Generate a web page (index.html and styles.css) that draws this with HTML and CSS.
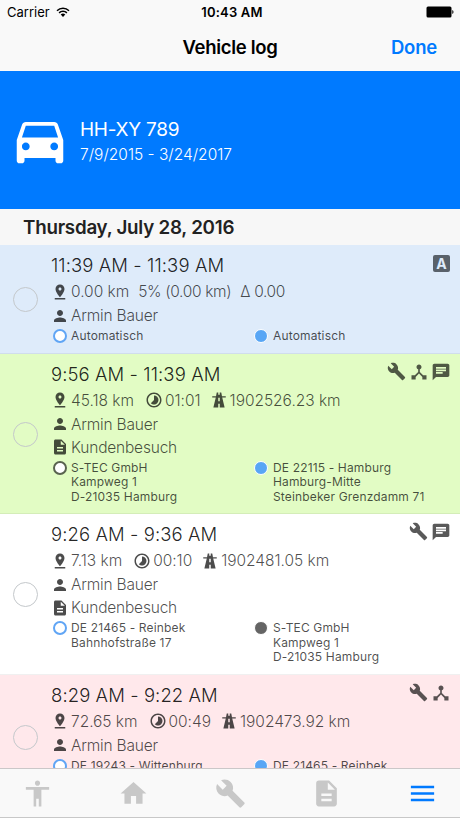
FILE: index.html
```
<!DOCTYPE html>
<html lang="en">
<head>
  <meta charset="UTF-8">
  <meta name="viewport" content="width=device-width, initial-scale=1.0">
  <title>Vehicle log</title>
  <link rel="stylesheet" href="styles.css">
</head>
<body>
  <!-- Icons -->
  <svg class="sprite" aria-hidden="true">
    <symbol id="pin" viewBox="0 0 24 24"><path d="M18 8c0-3.310-2.690-6-6-6S6 4.690 6 8c0 4.500 6 11 6 11s6-6.500 6-11zm-8 0c0-1.100.9-2 2-2s2 .9 2 2-.89 2-2 2c-1.100 0-2-.9-2-2zM5 20v2h14v-2H5z"/></symbol>
    <symbol id="person" viewBox="0 0 24 24"><path d="M12 12c2.210 0 4-1.790 4-4s-1.790-4-4-4-4 1.790-4 4 1.790 4 4 4zm0 2c-2.670 0-8 1.340-8 4v2h16v-2c0-2.660-5.330-4-8-4z"/></symbol>
    <symbol id="doc" viewBox="0 0 24 24"><path d="M14 2H6c-1.100 0-1.990.9-1.990 2L4 20c0 1.100.89 2 1.990 2H18c1.100 0 2-.9 2-2V8l-6-6zm2 16H8v-2h8v2zm0-4H8v-2h8v2zm-3-5V3.500L18.500 9H13z"/></symbol>
    <symbol id="car" viewBox="0 0 24 24"><path d="M18.920 6.010C18.720 5.420 18.160 5 17.500 5h-11c-.66 0-1.210.42-1.420 1.010L3 12v8c0 .55.45 1 1 1h1c.55 0 1-.45 1-1v-1h12v1c0 .55.45 1 1 1h1c.55 0 1-.45 1-1v-8l-2.080-5.990zM6.500 16c-.83 0-1.500-.67-1.500-1.500S5.670 13 6.500 13s1.500.67 1.500 1.500S7.330 16 6.500 16zm11 0c-.83 0-1.500-.67-1.500-1.500s.67-1.500 1.500-1.500 1.500.67 1.500 1.500-.67 1.500-1.500 1.500zM5 11l1.500-4.500h11L19 11H5z"/></symbol>
    <symbol id="wrench" viewBox="0 0 24 24"><path d="M22.700 19l-9.100-9.100c.9-2.300.4-5-1.500-6.900-2-2-5-2.400-7.400-1.300L9 6 6 9 1.600 4.700C.4 7.100.9 10.100 2.900 12.100c1.900 1.900 4.600 2.400 6.900 1.500l9.100 9.100c.4.4 1 .4 1.400 0l2.300-2.300c.5-.4.5-1.100.1-1.400z"/></symbol>
    <symbol id="chat" viewBox="0 0 24 24"><path d="M20 2H4c-1.100 0-1.990.9-1.990 2L2 22l4-4h14c1.100 0 2-.9 2-2V4c0-1.100-.9-2-2-2zM6 9h12v2H6V9zm8 5H6v-2h8v2zm4-6H6V6h12v2z"/></symbol>
    <symbol id="hub" viewBox="0 0 24 24"><path d="M17 16l-4-4V8.820C14.160 8.400 15 7.300 15 6c0-1.660-1.340-3-3-3S9 4.340 9 6c0 1.300.84 2.400 2 2.820V12l-4 4H3v5h5v-3.050l4-4.200 4 4.200V21h5v-5h-4z"/></symbol>
    <symbol id="time" viewBox="0 0 24 24"><path d="M16.240 7.760C15.070 6.590 13.540 6 12 6v6l-4.240 4.240c2.340 2.340 6.140 2.340 8.490 0 2.340-2.340 2.340-6.140-.01-8.480zM12 2C6.480 2 2 6.480 2 12s4.480 10 10 10 10-4.480 10-10S17.520 2 12 2zm0 18c-4.420 0-8-3.580-8-8s3.580-8 8-8 8 3.580 8 8-3.580 8-8 8z"/></symbol>
    <symbol id="road" viewBox="0 0 24 24"><path d="M9 2h2v3h2V2h2l1 5h5v1.600h-4.700L19.500 22H13v-5h-2v5H4.500L7.700 8.600H3V7h5zM11 9v4.500h2V9z" fill-rule="evenodd"/></symbol>
    <symbol id="home" viewBox="0 0 24 24"><path d="M10 20v-6h4v6h5v-8h3L12 3 2 12h3v8z"/></symbol>
    <symbol id="body" viewBox="0 0 24 24"><path d="M12 2c1.100 0 2 .9 2 2s-.9 2-2 2-2-.9-2-2 .9-2 2-2zm9 7h-6v13h-2v-6h-2v6H9V9H3V7h18v2z"/></symbol>
    <symbol id="menu" viewBox="0 0 24 24"><path d="M3 18h18v-2H3v2zm0-5h18v-2H3v2zm0-7v2h18V6H3z"/></symbol>
  </svg>

  <div class="screen">
    <header class="top">
      <div class="status">
        <div class="carrier">
          <span>Carrier</span>
          <svg class="wifi" viewBox="0 0 14 10">
            <path d="M1 3.700a8.600 8.600 0 0 1 12 0M3.100 5.900a5.500 5.500 0 0 1 7.800 0" fill="none" stroke="#000" stroke-width="1.500"/>
            <path d="M4.700 7.500a3.300 3.300 0 0 1 4.600 0L7 9.900z"/>
          </svg>
        </div>
        <span class="clock">10:43 AM</span>
        <svg class="battery" viewBox="0 0 28 12">
          <rect x="0.500" y="0.500" width="25" height="11" rx="1.500"/>
          <path d="M26.300 4c1.600.5 1.600 3.500 0 4z"/>
        </svg>
      </div>
      <div class="nav">
        <h1>Vehicle log</h1>
        <a class="done" href="#">Done</a>
      </div>
    </header>

    <section class="vehicle">
      <svg class="car"><use href="#car"/></svg>
      <div class="vehicle-text">
        <p class="plate">HH-XY 789</p>
        <p class="period">7/9/2015 - 3/24/2017</p>
      </div>
    </section>

    <h2 class="day"><span>Thursday, July 28, 2016</span></h2>

    <main class="log">
      <article class="trip blue">
        <span class="check"></span>
        <div class="info">
          <div class="head">
            <h3>11:39 AM - 11:39 AM</h3>
            <div class="flags"><span class="auto">A</span></div>
          </div>
          <div class="line stats">
            <svg><use href="#pin"/></svg><span>0.00 km</span><span class="extra">5% (0.00 km)</span><span class="extra">Δ 0.00</span>
          </div>
          <div class="line"><svg><use href="#person"/></svg><span>Armin Bauer</span></div>
          <div class="places">
            <p class="place"><i class="dot ring"></i>Automatisch</p>
            <p class="place"><i class="dot full"></i>Automatisch</p>
          </div>
        </div>
      </article>

      <article class="trip green">
        <span class="check"></span>
        <div class="info">
          <div class="head">
            <h3>9:56 AM - 11:39 AM</h3>
            <div class="flags">
              <svg class="tool"><use href="#wrench"/></svg>
              <svg><use href="#hub"/></svg>
              <svg><use href="#chat"/></svg>
            </div>
          </div>
          <div class="line stats">
            <svg><use href="#pin"/></svg><span>45.18 km</span>
            <svg class="time"><use href="#time"/></svg><span>01:01</span>
            <svg class="road"><use href="#road"/></svg><span>1902526.23 km</span>
          </div>
          <div class="line"><svg><use href="#person"/></svg><span>Armin Bauer</span></div>
          <div class="line"><svg><use href="#doc"/></svg><span>Kundenbesuch</span></div>
          <div class="places">
            <p class="place"><i class="dot ring gray"></i>S-TEC GmbH<br>Kampweg 1<br>D-21035 Hamburg</p>
            <p class="place"><i class="dot full"></i>DE 22115 - Hamburg<br>Hamburg-Mitte<br>Steinbeker Grenzdamm 71</p>
          </div>
        </div>
      </article>

      <article class="trip white">
        <span class="check"></span>
        <div class="info">
          <div class="head">
            <h3>9:26 AM - 9:36 AM</h3>
            <div class="flags">
              <svg class="tool"><use href="#wrench"/></svg>
              <svg><use href="#chat"/></svg>
            </div>
          </div>
          <div class="line stats">
            <svg><use href="#pin"/></svg><span>7.13 km</span>
            <svg class="time"><use href="#time"/></svg><span>00:10</span>
            <svg class="road"><use href="#road"/></svg><span>1902481.05 km</span>
          </div>
          <div class="line"><svg><use href="#person"/></svg><span>Armin Bauer</span></div>
          <div class="line"><svg><use href="#doc"/></svg><span>Kundenbesuch</span></div>
          <div class="places">
            <p class="place"><i class="dot ring"></i>DE 21465 - Reinbek<br>Bahnhofstraße 17</p>
            <p class="place"><i class="dot full gray"></i>S-TEC GmbH<br>Kampweg 1<br>D-21035 Hamburg</p>
          </div>
        </div>
      </article>

      <article class="trip pink">
        <span class="check"></span>
        <div class="info">
          <div class="head">
            <h3>8:29 AM - 9:22 AM</h3>
            <div class="flags">
              <svg class="tool"><use href="#wrench"/></svg>
              <svg><use href="#hub"/></svg>
            </div>
          </div>
          <div class="line stats">
            <svg><use href="#pin"/></svg><span>72.65 km</span>
            <svg class="time"><use href="#time"/></svg><span>00:49</span>
            <svg class="road"><use href="#road"/></svg><span>1902473.92 km</span>
          </div>
          <div class="line"><svg><use href="#person"/></svg><span>Armin Bauer</span></div>
          <div class="places">
            <p class="place"><i class="dot ring"></i>DE 19243 - Wittenburg</p>
            <p class="place"><i class="dot full"></i>DE 21465 - Reinbek</p>
          </div>
        </div>
      </article>
    </main>

    <nav class="tabs">
      <a href="#"><svg><use href="#body"/></svg></a>
      <a href="#"><svg><use href="#home"/></svg></a>
      <a href="#"><svg><use href="#wrench"/></svg></a>
      <a href="#"><svg><use href="#doc"/></svg></a>
      <a href="#" class="active"><svg><use href="#menu"/></svg></a>
    </nav>
  </div>
</body>
</html>
```

FILE: styles.css
```
:root {
  --blue: #007aff;
  --bar: #f9f9f9;
}

* {
  box-sizing: border-box;
}

body {
  margin: 0;
  font-family: Inter, "Liberation Sans", sans-serif;
  color: #000;
}

h1, h2, h3, p {
  margin: 0;
}

a {
  text-decoration: none;
  color: inherit;
}

svg {
  display: block;
  flex: none;
  fill: currentColor;
}

.sprite {
  position: absolute;
  width: 0;
  height: 0;
}

.screen {
  width: 460px;
  height: 818px;
  display: flex;
  flex-direction: column;
  overflow: hidden;
}

/* Status bar and title */
.top {
  height: 71px;
  background: var(--bar);
}

.status {
  height: 23px;
  padding: 0 6px 0 7px;
  display: grid;
  grid-template-columns: 1fr auto 1fr;
  align-items: center;
  font-size: 13px;
}

.carrier {
  display: flex;
  align-items: center;
  gap: 6px;
}

.wifi {
  width: 14px;
  height: 10px;
}

.clock {
  padding-left: 3px;
  font-weight: 600;
  letter-spacing: 0.2px;
}

.battery {
  width: 28px;
  height: 12px;
  justify-self: end;
}

.nav {
  height: 48px;
  padding: 0 23px;
  display: grid;
  grid-template-columns: 1fr auto 1fr;
  align-items: center;
}

.nav h1 {
  grid-column: 2;
  font-size: 18.5px;
  font-weight: 600;
  letter-spacing: -0.3px;
}

.done {
  justify-self: end;
  font-size: 18.5px;
  font-weight: 600;
  letter-spacing: -0.2px;
  color: var(--blue);
}

.vehicle {
  height: 138px;
  padding: 0 9px;
  display: flex;
  align-items: center;
  gap: 9px;
  background: var(--blue);
  color: #fff;
}

.vehicle-text {
  padding-top: 3px;
}

.car {
  width: 62px;
  height: 62px;
}

.plate {
  font-size: 19px;
  line-height: 25px;
  letter-spacing: -0.25px;
}

.period {
  font-size: 15.5px;
  font-weight: 350;
  line-height: 25px;
}

.day {
  height: 36px;
  padding: 1px 0 0 23px;
  display: flex;
  align-items: center;
  background: #f7f7f7;
  color: #222;
  font-size: 18.8px;
  font-weight: 600;
  letter-spacing: -0.25px;
}

/* Trips */
.log {
  flex: 1;
  min-height: 0;
  overflow: hidden;
}

.trip {
  display: flex;
  align-items: center;
  padding: 9px 9px 9px 13px;
  border-bottom: 1px solid rgba(0, 0, 0, 0.06);
}

.blue { background: #deebfa; }
.green { background: #e2fcc4; }
.white { background: #fff; }

.pink {
  min-height: 124px;
  background: #ffe8eb;
}

.check {
  flex: none;
  width: 25px;
  height: 25px;
  margin-top: 2px;
  border: 1px solid #c4c8cb;
  border-radius: 50%;
}

.info {
  flex: 1;
  align-self: flex-start;
  margin-left: 13px;
  color: rgba(0, 0, 0, 0.7);
}

.head {
  height: 25px;
  display: flex;
  justify-content: space-between;
  color: rgba(0, 0, 0, 0.87);
}

.head h3 {
  font-size: 18.5px;
  font-weight: 350;
  line-height: 23px;
  letter-spacing: 0.08px;
}

.flags {
  display: flex;
  gap: 2px;
  color: rgba(0, 0, 0, 0.65);
}

.flags svg {
  width: 20px;
  height: 20px;
  margin-top: -1px;
}

.flags .tool {
  width: 19px;
  height: 19px;
  margin-right: 1px;
}

.auto {
  width: 17px;
  height: 17px;
  margin: 1px;
  border-radius: 2px;
  background: #59616a;
  color: #deebfa;
  font-size: 14px;
  font-weight: 700;
  line-height: 17px;
  text-align: center;
}

.line {
  height: 23px;
  display: flex;
  align-items: center;
  gap: 2px;
  font-size: 15.5px;
  font-weight: 350;
  letter-spacing: -0.2px;
}

.stats {
  height: 25px;
  letter-spacing: -0.03px;
}

.line svg {
  width: 18px;
  height: 18px;
}

.line .time {
  margin-left: 9px;
}

.line .road {
  margin-left: 7px;
}

.line .extra {
  margin-left: 7px;
  letter-spacing: -0.35px;
}

.places {
  padding-top: 2px;
  display: grid;
  grid-template-columns: 202px 1fr;
}

.place {
  position: relative;
  padding-left: 20px;
  font-size: 12px;
  line-height: 14.5px;
  letter-spacing: 0.15px;
}

.dot {
  position: absolute;
  left: 2px;
  top: 0;
  width: 14px;
  height: 14px;
  border-radius: 50%;
}

.ring {
  border: 2px solid #60a5f5;
  background: #fff;
}

.ring.gray {
  border-color: #59634f;
}

.full {
  left: 1px;
  border: 1px solid #fff;
  background: #58a6f5;
}

.full.gray {
  background: #646464;
}

/* Bottom tabs */
.tabs {
  height: 50px;
  padding: 0 22px;
  display: flex;
  justify-content: space-between;
  align-items: center;
  border-top: 1px solid #cbc7c8;
  border-bottom: 1px solid #c8c8c8;
  background: var(--bar);
  color: #c8c8c8;
}

.tabs svg {
  width: 31px;
  height: 31px;
}

.tabs .active {
  color: var(--blue);
}
```
